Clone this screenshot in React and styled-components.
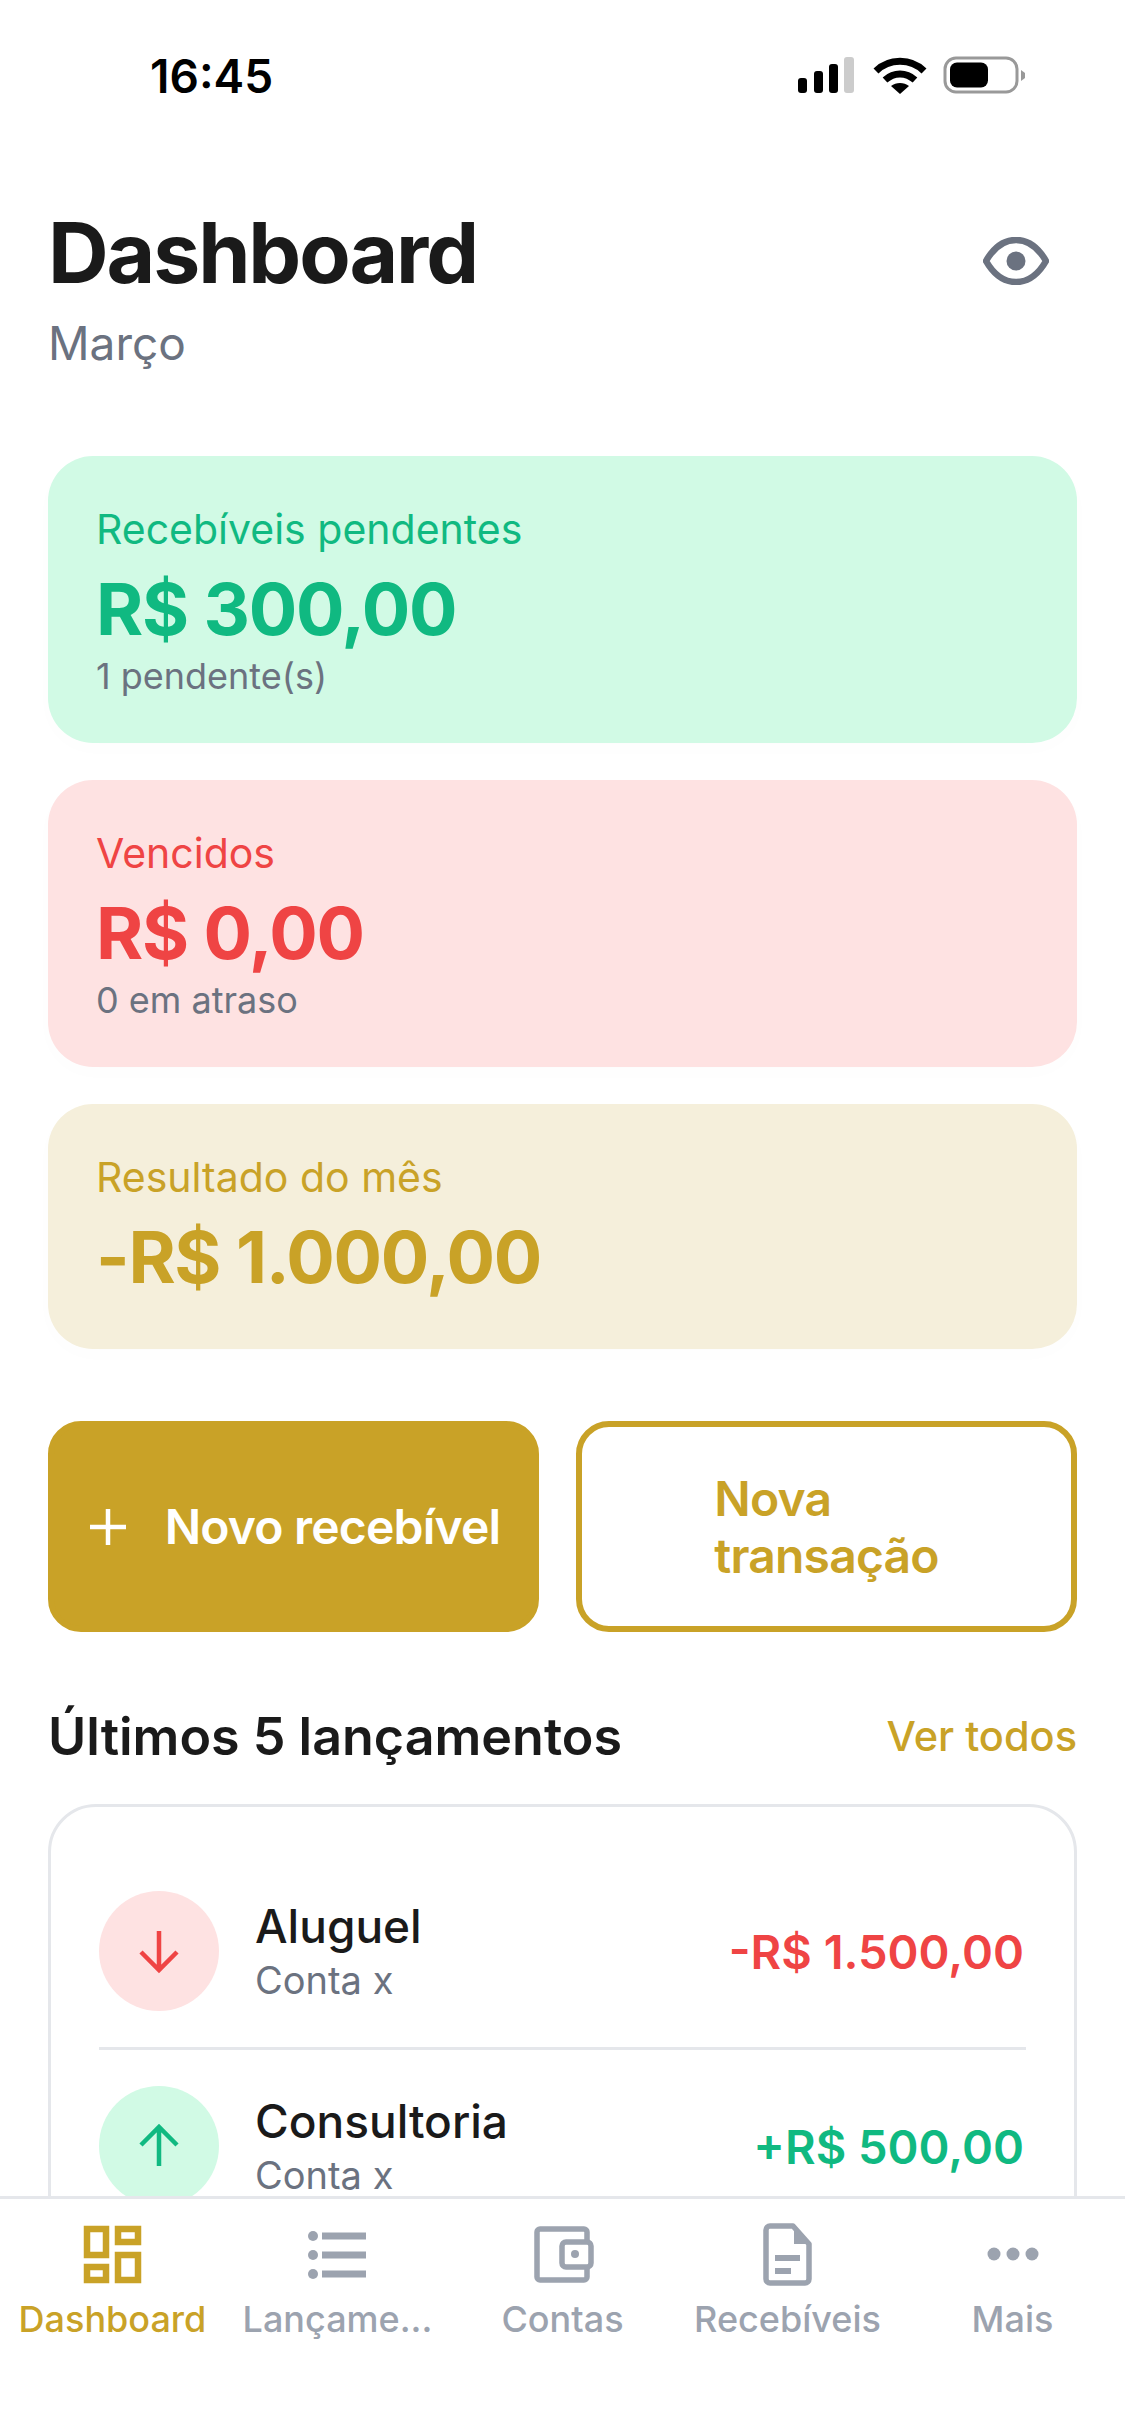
import styled, {createGlobalStyle} from "styled-components";

const GOLD = "#C9A227";
const GREEN = "#10B981";
const RED = "#EF4444";

const GlobalStyle = createGlobalStyle`
  html, body {
    margin: 0;
    padding: 0;
    background: #fff;
    font-family: Inter, "Noto Sans", sans-serif;
  }
  * { box-sizing: border-box; }
`

const Page = styled.div`
  width: 1125px;
  height: 2436px;
  display: flex;
  flex-direction: column;
  overflow: hidden;
  background: #fff;
`

const StatusBar = styled.div`
  height: 132px;
  flex-shrink: 0;
  padding: 48px 98px 0 150px;
  display: flex;
  justify-content: space-between;
  align-items: flex-start;
`

const Clock = styled.span`
  font-size: 46px;
  font-weight: 600;
  line-height: 56px;
  color: #000;
`

const StatusIcons = styled.div`
  display: flex;
  gap: 8px;
  margin-top: 8px;
`

const Content = styled.main`
  flex: 1;
  min-height: 0;
  overflow: hidden;
  padding: 0 48px;
`

const Header = styled.header`
  display: flex;
  justify-content: space-between;
  align-items: flex-start;
  height: 324px;
  padding-top: 75px;
`

const Title = styled.h1`
  margin: 0;
  font-size: 84px;
  line-height: 92px;
  font-weight: 700;
  letter-spacing: -2.100px;
  color: #1a1a1a;
`

const Month = styled.p`
  margin: 15px 0 0;
  font-size: 46px;
  line-height: 58px;
  color: #6b7280;
`

const EyeButton = styled.div`
  margin: 30px 28px 0 0;
  line-height: 0;
`

const Cards = styled.section`
  display: flex;
  flex-direction: column;
  gap: 37px;
`

const SummaryCard = styled.div`
  height: ${p => p.$height}px;
  padding: 48px;
  border-radius: 45px;
  background: ${p => p.$bg};
  box-shadow: 0 6px 24px rgba(0, 0, 0, 0.012);
`

const CardLabel = styled.div`
  font-size: 41px;
  line-height: 50px;
  color: ${p => p.$color};
`

const CardValue = styled.div`
  margin-top: 7px;
  font-size: 72px;
  line-height: 96px;
  font-weight: 700;
  letter-spacing: -1.300px;
  color: ${p => p.$color};
`

const CardNote = styled.div`
  font-size: 36px;
  line-height: 38px;
  color: #6b7280;
`

const Actions = styled.div`
  display: grid;
  grid-template-columns: 491px 501px;
  gap: 37px;
  margin-top: 72px;
`

const ActionButton = styled.div`
  height: 211px;
  display: flex;
  align-items: center;
  justify-content: center;
  gap: 36px;
  border-radius: 33px;
  border: 6px solid ${GOLD};
  background: ${p => (p.$filled ? GOLD : "#fff")};
  color: ${p => (p.$filled ? "#fff" : GOLD)};
  font-size: 48px;
  line-height: 57px;
  font-weight: 600;
  letter-spacing: -0.800px;
`

const ActionText = styled.span`
  width: ${p => (p.$narrow ? "min-content" : "auto")};
`

const SectionHead = styled.div`
  display: flex;
  justify-content: space-between;
  align-items: center;
  margin-top: 62px;
  height: 84px;
`

const SectionTitle = styled.h2`
  margin: 0;
  font-size: 52px;
  font-weight: 600;
  color: #1a1a1a;
`

const SeeAll = styled.span`
  font-size: 41.500px;
  font-weight: 500;
  color: ${GOLD};
`

const ListCard = styled.div`
  margin-top: 26px;
  padding: 48px;
  border: 3px solid #e5e7eb;
  border-radius: 48px;
  background: #fff;
`

const Row = styled.div`
  display: flex;
  align-items: center;
  gap: 36px;
  padding: 36px 0;
  border-bottom: ${p => (p.$last ? "none" : "3px solid #e5e7eb")};
`

const Circle = styled.div`
  width: 120px;
  height: 120px;
  flex-shrink: 0;
  border-radius: 50%;
  display: flex;
  align-items: center;
  justify-content: center;
  background: ${p => p.$bg};
`

const RowText = styled.div`
  flex: 1;
  min-width: 0;
`

const RowTitle = styled.div`
  font-size: 46px;
  line-height: 54px;
  font-weight: 500;
  color: #1a1a1a;
`

const RowSub = styled.div`
  margin-top: 4px;
  font-size: 38px;
  line-height: 46px;
  color: #6b7280;
`

const RowAmount = styled.div`
  margin-right: 2px;
  font-size: 47px;
  font-weight: 600;
  color: ${p => p.$color};
`

const TabBar = styled.nav`
  height: 240px;
  flex-shrink: 0;
  display: grid;
  grid-template-columns: repeat(5, 225px);
  padding-top: 20px;
  align-items: start;
  border-top: 3px solid #e5e7eb;
  background: #fff;
`

const Tab = styled.div`
  display: flex;
  flex-direction: column;
  align-items: center;
  min-width: 0;
  color: ${p => (p.$active ? GOLD : "#9ca3af")};
`

const TabIcon = styled.div`
  width: 72px;
  height: 72px;
  line-height: 0;
`

const TabLabel = styled.span`
  margin-top: 3px;
  font-size: 36px;
  line-height: 50px;
  font-weight: 500;
  white-space: nowrap;
`

const Signal = () => (
  <svg width="60" height="38" viewBox="0 0 60 38">
    <rect x="1" y="22" width="9" height="15" rx="3" fill="#000"/>
    <rect x="17" y="15" width="9" height="22" rx="3" fill="#000"/>
    <rect x="32" y="8" width="9" height="29" rx="3" fill="#000"/>
    <rect x="47" y="1" width="10" height="36" rx="3" fill="#ccc"/>
  </svg>
)

const Wifi = () => (
  <svg width="70" height="38" viewBox="0 0 70 38">
    <path d="M11 15 C24 2 46 2 59 15" fill="none" stroke="#000" strokeWidth="7"/>
    <path d="M20 24 C29 16 41 16 50 24" fill="none" stroke="#000" strokeWidth="7"/>
    <path d="M26 30 C31 26 39 26 44 30 L35 38 Z" fill="#000"/>
  </svg>
)

const Battery = () => (
  <svg width="84" height="38" viewBox="0 0 84 38">
    <rect x="2" y="2" width="72" height="34" rx="11" fill="none" stroke="#999" strokeWidth="3"/>
    <rect x="7" y="6.500" width="38" height="25" rx="7" fill="#000"/>
    <path d="M78 14 L82 17 V22 L78 25 Z" fill="#999"/>
  </svg>
)

const EyeIcon = () => (
  <svg width="66" height="48" viewBox="0 0 66 48">
    <path d="M3 24 C11 10 21 3 33 3 C45 3 55 10 63 24 C55 38 45 45 33 45 C21 45 11 38 3 24 Z"
          fill="none" stroke="#6b7280" strokeWidth="6.500" strokeLinejoin="round"/>
    <circle cx="33" cy="24" r="9.500" fill="#6b7280"/>
  </svg>
)

const PlusIcon = () => (
  <svg width="42" height="42" viewBox="0 0 42 42">
    <path d="M21 3 V39 M3 21 H39" stroke="#fff" strokeWidth="4.500"/>
  </svg>
)

const ArrowIcon = ({up, color}) => (
  <svg width="48" height="48" viewBox="0 0 48 48" fill="none" stroke={color} strokeWidth="4.500">
    {up
      ? <path d="M24 44 V5 M6 23 L24 5 L42 23"/>
      : <path d="M24 4 V43 M6 25 L24 43 L42 25"/>}
  </svg>
)

const DashboardIcon = () => (
  <svg width="72" height="72" viewBox="0 0 72 72" fill="none" stroke="currentColor" strokeWidth="6.500">
    <rect x="10" y="10" width="19" height="26"/>
    <rect x="41" y="10" width="20" height="13"/>
    <rect x="41" y="36" width="20" height="25"/>
    <rect x="10" y="48" width="19" height="13"/>
  </svg>
)

const ListIcon = () => (
  <svg width="72" height="72" viewBox="0 0 72 72" fill="currentColor">
    <circle cx="11" cy="17" r="5"/>
    <circle cx="11" cy="36" r="5"/>
    <circle cx="11" cy="55" r="5"/>
    <rect x="20" y="13.500" width="44" height="7"/>
    <rect x="20" y="32.500" width="44" height="7"/>
    <rect x="20" y="51.500" width="44" height="7"/>
  </svg>
)

const WalletIcon = () => (
  <svg width="72" height="72" viewBox="0 0 72 72" fill="none" stroke="currentColor" strokeWidth="5.500">
    <path d="M60 23 V13 a3 3 0 0 0 -3 -3 H13 a3 3 0 0 0 -3 3 V58 a3 3 0 0 0 3 3 H57 a3 3 0 0 0 3 -3 V48"/>
    <rect x="35" y="23" width="29" height="25" rx="4"/>
    <circle cx="48" cy="35" r="4" fill="currentColor" stroke="none"/>
  </svg>
)

const DocIcon = () => (
  <svg width="72" height="72" viewBox="0 0 72 72" fill="none" stroke="currentColor" strokeWidth="5.500">
    <path d="M41 7 H18 a4 4 0 0 0 -4 4 V60 a4 4 0 0 0 4 4 H53 a4 4 0 0 0 4 -4 V25 Z" strokeLinejoin="round"/>
    <path d="M42 6 L58 25 H42 Z" fill="currentColor" stroke="none"/>
    <rect x="23" y="36" width="25" height="6" fill="currentColor" stroke="none"/>
    <rect x="23" y="49" width="16" height="6" fill="currentColor" stroke="none"/>
  </svg>
)

const DotsIcon = () => (
  <svg width="72" height="72" viewBox="0 0 72 72" fill="currentColor">
    <circle cx="17" cy="35" r="6.500"/>
    <circle cx="36" cy="35" r="6.500"/>
    <circle cx="55" cy="35" r="6.500"/>
  </svg>
)

const cards = [
  {label: "Recebíveis pendentes", value: "R$ 300,00", note: "1 pendente(s)", color: GREEN, bg: "#d1fae5", height: 287},
  {label: "Vencidos", value: "R$ 0,00", note: "0 em atraso", color: RED, bg: "#fee2e2", height: 287},
  {label: "Resultado do mês", value: "-R$ 1.000,00", color: GOLD, bg: "#f5efdb", height: 245},
]

const rows = [
  {title: "Aluguel", sub: "Conta x", amount: "-R$ 1.500,00", color: RED, bg: "#fee2e2"},
  {title: "Consultoria", sub: "Conta x", amount: "+R$ 500,00", color: GREEN, bg: "#d1fae5", up: true},
]

const tabs = [
  {label: "Dashboard", Icon: DashboardIcon, active: true},
  {label: "Lançame...", Icon: ListIcon},
  {label: "Contas", Icon: WalletIcon},
  {label: "Recebíveis", Icon: DocIcon},
  {label: "Mais", Icon: DotsIcon},
]

const App = () => (
  <Page>
    <GlobalStyle/>
    <StatusBar>
      <Clock>16:45</Clock>
      <StatusIcons>
        <Signal/>
        <Wifi/>
        <Battery/>
      </StatusIcons>
    </StatusBar>
    <Content>
      <Header>
        <div>
          <Title>Dashboard</Title>
          <Month>Março</Month>
        </div>
        <EyeButton><EyeIcon/></EyeButton>
      </Header>
      <Cards>
        {cards.map(card => (
          <SummaryCard key={card.label} $bg={card.bg} $height={card.height}>
            <CardLabel $color={card.color}>{card.label}</CardLabel>
            <CardValue $color={card.color}>{card.value}</CardValue>
            {card.note && <CardNote>{card.note}</CardNote>}
          </SummaryCard>
        ))}
      </Cards>
      <Actions>
        <ActionButton $filled>
          <PlusIcon/>
          <ActionText>Novo recebível</ActionText>
        </ActionButton>
        <ActionButton>
          <ActionText $narrow>Nova transação</ActionText>
        </ActionButton>
      </Actions>
      <SectionHead>
        <SectionTitle>Últimos 5 lançamentos</SectionTitle>
        <SeeAll>Ver todos</SeeAll>
      </SectionHead>
      <ListCard>
        {rows.map((row, i) => (
          <Row key={row.title} $last={i === rows.length - 1}>
            <Circle $bg={row.bg}><ArrowIcon up={row.up} color={row.color}/></Circle>
            <RowText>
              <RowTitle>{row.title}</RowTitle>
              <RowSub>{row.sub}</RowSub>
            </RowText>
            <RowAmount $color={row.color}>{row.amount}</RowAmount>
          </Row>
        ))}
      </ListCard>
    </Content>
    <TabBar>
      {tabs.map(({label, Icon, active}) => (
        <Tab key={label} $active={active}>
          <TabIcon><Icon/></TabIcon>
          <TabLabel>{label}</TabLabel>
        </Tab>
      ))}
    </TabBar>
  </Page>
);

export default App
